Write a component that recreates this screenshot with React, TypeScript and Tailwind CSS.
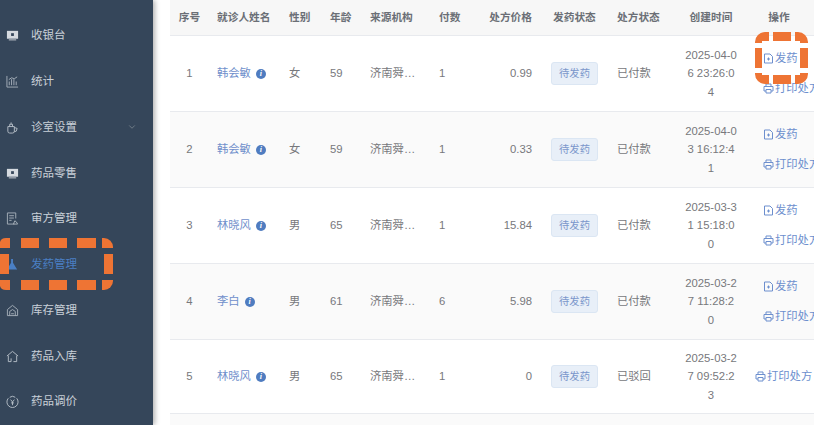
import type { ReactNode } from 'react';
import { ChevronDown } from 'lucide-react';

const cols = 'grid grid-cols-[39px_72px_41px_40px_69px_45px_64px_69px_69px_66px_70px]';
const font = { fontFamily: "'Liberation Sans', 'Noto Sans CJK SC', sans-serif" };

type Row = {
  no: number;
  name: string;
  sex: string;
  age: number;
  count: number;
  price: string;
  rx: string;
  time: string;
  dispense: boolean;
};

const rows: Row[] = [
  { no: 1, name: '韩会敏', sex: '女', age: 59, count: 1, price: '0.99', rx: '已付款', time: '2025-04-06 23:26:04', dispense: true },
  { no: 2, name: '韩会敏', sex: '女', age: 59, count: 1, price: '0.33', rx: '已付款', time: '2025-04-03 16:12:41', dispense: true },
  { no: 3, name: '林晓风', sex: '男', age: 65, count: 1, price: '15.84', rx: '已付款', time: '2025-03-31 15:18:00', dispense: true },
  { no: 4, name: '李白', sex: '男', age: 61, count: 6, price: '5.98', rx: '已付款', time: '2025-03-27 11:28:20', dispense: true },
  { no: 5, name: '林晓风', sex: '男', age: 65, count: 1, price: '0', rx: '已驳回', time: '2025-03-27 09:52:23', dispense: false },
];

const head = ['序号', '就诊人姓名', '性别', '年龄', '来源机构', '付数', '处方价格', '发药状态', '处方状态', '创建时间', '操作'];

function Screen() {
  return (
    <svg width="13" height="13" viewBox="0 0 14 14" className="text-[#d5dae0]">
      <path d="M1 2h12v8.500H1z" fill="currentColor" />
      <path d="M3 10.500h8V12.500H3z" fill="#8f99a5" />
      <rect x="5.500" y="4.500" width="3" height="3" fill="#35465a" />
    </svg>
  );
}

function Chart() {
  return (
    <svg width="13" height="13" viewBox="0 0 14 14" fill="none" stroke="#a8b1bb" strokeWidth="1">
      <path d="M1 1v12h12M3.500 11V7M6 11V4.500M8.500 11V4.500M11 11V7M3 5l3-2 3 1 3-2" />
    </svg>
  );
}

function Cup() {
  return (
    <svg width="13" height="13" viewBox="0 0 14 14" fill="none" stroke="#b8c0c9" strokeWidth="1">
      <path d="M2 6h7v5a2 2 0 0 1-2 2H4a2 2 0 0 1-2-2zM9 7l3 1-1 3-2 .5M4 6V3.500h3V6M5.500 3.500V1.500" />
    </svg>
  );
}

function Review() {
  return (
    <svg width="13" height="13" viewBox="0 0 14 14" fill="none" stroke="#a8b1bb" strokeWidth="1">
      <path d="M9 13H1.500V1h9v6M3.500 4h5M3.500 6.500h5M3.500 9h2.500M8 13l1.500-3.500L11 10.500l1.500 2.500z" />
    </svg>
  );
}

function Flask() {
  return (
    <svg width="13" height="13" viewBox="0 0 14 14" fill="#4a7fc4">
      <path d="M5.500 1h2v4l4.500 7.500H1L5.500 5z" />
    </svg>
  );
}

function Stock() {
  return (
    <svg width="13" height="13" viewBox="0 0 14 14" fill="none" stroke="#a8b1bb" strokeWidth="1">
      <path d="M1.500 6L7 1.500 12.500 6v6.500h-11zM4 12.500V8l3-2 3 2v4.500M5.500 10.500h3" />
    </svg>
  );
}

function Inbound() {
  return (
    <svg width="13" height="13" viewBox="0 0 14 14" fill="none" stroke="#b8c0c9" strokeWidth="1">
      <path d="M1 6.500L7 1.500l6 5M2.500 6v6.500h3V9M11.500 6v6.500H8" />
    </svg>
  );
}

function Price() {
  return (
    <svg width="13" height="13" viewBox="0 0 14 14" fill="none" stroke="#b8c0c9" strokeWidth="1">
      <path d="M2.500 3.500a6 6 0 1 0 9 0M4 2.500a5 5 0 0 1 6 0M5 5l2 2.500L9 5M7 7.500V11M5.500 8.500h3" />
    </svg>
  );
}

const menu: { label: string; icon: ReactNode; active?: boolean; arrow?: boolean }[] = [
  { label: '收银台', icon: <Screen /> },
  { label: '统计', icon: <Chart /> },
  { label: '诊室设置', icon: <Cup />, arrow: true },
  { label: '药品零售', icon: <Screen /> },
  { label: '审方管理', icon: <Review /> },
  { label: '发药管理', icon: <Flask />, active: true },
  { label: '库存管理', icon: <Stock /> },
  { label: '药品入库', icon: <Inbound /> },
  { label: '药品调价', icon: <Price /> },
];

function FileIcon() {
  return (
    <svg width="11" height="11" viewBox="0 0 11 11" fill="none" stroke="#6d8fce" strokeWidth="1" className="shrink-0">
      <path d="M1.500 1h5.500l2.500 2.500V10h-8zM5.500 4.500v3M4 6h3" />
    </svg>
  );
}

function PrintIcon() {
  return (
    <svg width="11" height="11" viewBox="0 0 11 11" fill="none" stroke="#6d8fce" strokeWidth="1" className="shrink-0">
      <path d="M3 3.500V1h5v2.500M3 8H1V3.500h9V8H8M3 6.500h5V10H3z" />
    </svg>
  );
}

// orange dashed annotations sit on top of the screenshot, pieces measured from it
function Annotations() {
  return (
    <svg width="820" height="425" viewBox="0 0 820 425" fill="#ee7434" className="pointer-events-none absolute left-0 top-0">
      {/* sidebar frame */}
      <path d="M0 248V242Q1 238 6 238H10V248Z" />
      <path d="M0 280V286Q1 290 6 290H10V280Z" />
      <path d="M0 254H9V274H0Z" />
      <path d="M21 238H39V248H21ZM49 238H67V248H49ZM77 238H96V248H77Z" />
      <path d="M21 280H39V290H21ZM49 280H67V290H49ZM77 280H96V290H77Z" />
      <path d="M102 238H104A9 9 0 0 1 113 247V248H104V248H102Z" />
      <path d="M102 290H104A9 9 0 0 0 113 281V280H104H102Z" />
      <path d="M104 254H113V274H104Z" />
      {/* action frame */}
      <path d="M769 32H765A10 10 0 0 0 755 42V43H762V41H769Z" />
      <path d="M773 32H791V41H773Z" />
      <path d="M795 32H798A10 10 0 0 1 808 42V43H800V41H795Z" />
      <path d="M755 48H762V68H755ZM800 48H808V68H800Z" />
      <path d="M769 84H765A10 10 0 0 1 755 74V73H762V75H769Z" />
      <path d="M773 75H791V84H773Z" />
      <path d="M795 84H798A10 10 0 0 0 808 74V73H800V75H795Z" />
    </svg>
  );
}

export default function App() {
  return (
    <div className="relative flex h-[425px] w-[820px] overflow-hidden bg-white" style={font}>
      <aside className="flex h-full w-[153px] shrink-0 flex-col bg-[#35465a] pt-[13px] shadow-[2px_0_5px_rgba(0,0,0,0.3)]">
        {menu.map((m) => (
          <div key={m.label} className="flex h-[45.750px] shrink-0 items-center pl-[6px]">
            <span className="flex w-[25px] shrink-0">{m.icon}</span>
            <span className={`text-[11.500px] ${m.active ? 'text-[#4a7fc4]' : 'text-[#c9d0d8]'}`}>{m.label}</span>
            {m.arrow && <ChevronDown className="ml-[50px] h-[10px] w-[10px] text-[#79858f]" />}
          </div>
        ))}
      </aside>

      <main className="ml-[17px] w-[644px] shrink-0">
        <div className={`${cols} h-[36px] items-center border-b border-[#e8eaee] bg-[#f7f7f7] text-[10.700px] font-bold text-[#6b6f76]`}>
          {head.map((h, i) => (
            <div
              key={h}
              className={
                i === 0 || i === 9 || i === 10
                  ? 'text-center'
                  : i === 6
                    ? 'pr-[8px] text-right'
                    : i === 7
                      ? 'pl-[13px]'
                      : 'pl-[8px]'
              }
            >
              {h}
            </div>
          ))}
        </div>

        {rows.map((r, i) => (
          <div
            key={r.no}
            className={`${cols} ${r.no === 5 ? 'h-[74px]' : 'h-[76px]'} items-center border-b border-[#e8eaee] text-[11.300px] text-[#77787c] ${i % 2 ? 'bg-[#fafafa]' : 'bg-white'}`}
          >
            <div className="text-center">{r.no}</div>
            <div className="flex items-center gap-[5px] pl-[8px] text-[#6f8fcb]">
              {r.name}
              <span className="flex h-[10px] w-[10px] items-center justify-center rounded-full bg-[#4f7cc0] text-[8px] font-bold italic text-white" style={{ fontFamily: "'Liberation Serif', serif" }}>
                i
              </span>
            </div>
            <div className="pl-[8px]">{r.sex}</div>
            <div className="pl-[8px]">{r.age}</div>
            <div className="truncate pl-[8px]">济南舜…</div>
            <div className="pl-[8px]">{r.count}</div>
            <div className="pr-[8px] text-right">{r.price}</div>
            <div className="pl-[11px]">
              <span className="flex h-[23px] w-[47px] items-center justify-center rounded-[3px] border border-[#dbe6f3] bg-[#e8eff8] text-[10.300px] text-[#7b97cb]">
                待发药
              </span>
            </div>
            <div className="pl-[8px]">{r.rx}</div>
            <div className="mx-auto w-[52.500px] break-all text-center leading-[18.500px]">{r.time}</div>
            <div className="flex flex-col gap-[13px] overflow-hidden text-[#6d8fce]">
              {r.dispense ? (
                <>
                  <span className="flex items-center gap-px whitespace-nowrap pl-[19px]"><FileIcon />发药</span>
                  <span className="flex items-center gap-px whitespace-nowrap pl-[19px]"><PrintIcon />打印处方</span>
                </>
              ) : (
                <span className="flex items-center gap-px whitespace-nowrap pl-[11px]"><PrintIcon />打印处方</span>
              )}
            </div>
          </div>
        ))}
        <div className="h-[20px] bg-[#fafafa]" />
      </main>

      <Annotations />
    </div>
  );
}
